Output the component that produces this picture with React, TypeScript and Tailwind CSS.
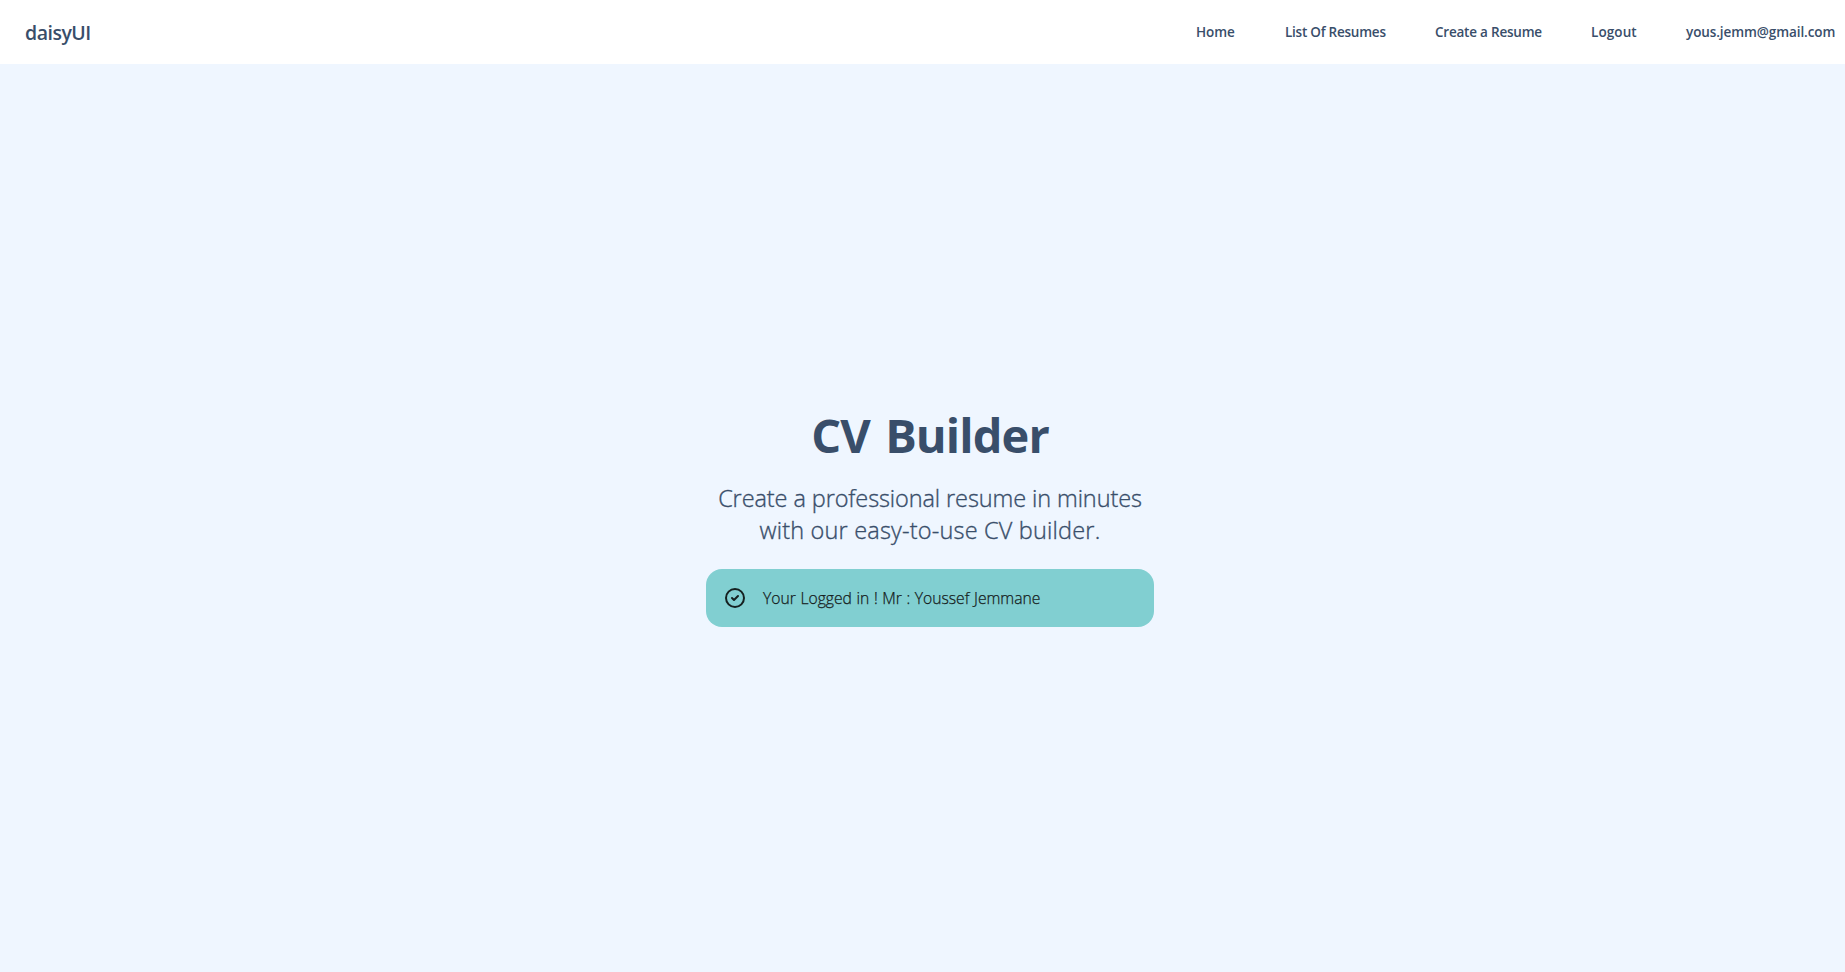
const links = [
  { label: 'Home', style: 'w-[39px] tracking-[-0.1px]' },
  { label: 'List Of Resumes', style: 'w-[100px] tracking-[-0.24px]' },
  { label: 'Create a Resume', style: 'w-[106px] tracking-[-0.22px]' },
  { label: 'Logout', style: 'w-[45px] tracking-[0.1px]' },
  { label: 'yous.jemm@gmail.com', style: 'w-[149px] tracking-[-0.09px]' },
];

function Navbar() {
  return (
    <header className="flex h-16 items-center justify-between bg-white pr-[10px] pl-[25px]">
      <a href="#" className="pt-0.5 text-[19.5px] leading-7 font-semibold tracking-[-0.5px]">daisyUI</a>
      <nav className="flex gap-[50px] text-[13.5px] leading-5 font-semibold whitespace-nowrap">
        {links.map(({ label, style }) => (
          <a key={label} href="#" className={style}>{label}</a>
        ))}
      </nav>
    </header>
  );
}

function SuccessAlert() {
  return (
    <div className="flex h-[58px] w-full items-center gap-4 rounded-2xl bg-[#81cfd1] px-[17px] text-left text-[#152020]">
      <svg className="h-6 w-6 shrink-0" viewBox="0 0 24 24" fill="none" stroke="currentColor" strokeWidth="2" strokeLinecap="round" strokeLinejoin="round">
        <path d="M9 12l2 2 4-4m6 2a9 9 0 11-18 0 9 9 0 0118 0z" />
      </svg>
      <span className="text-[15.7px] leading-6 font-light [-webkit-text-stroke:0.25px] [word-spacing:0.5px]">Your Logged in ! Mr : Youssef Jemmane</span>
    </div>
  );
}

export default function App() {
  return (
    <div className="flex h-screen flex-col overflow-hidden bg-[#eff6ff] font-['Open_Sans',sans-serif] text-[#394e6a]">
      <Navbar />
      <main className="flex grow flex-col items-center pt-[347px] pl-[15px]">
        <div className="flex w-md flex-col items-center text-center">
          <h1 className="text-[47px] leading-12 font-bold tracking-[-0.9px] [word-spacing:4px]">CV Builder</h1>
          <p className="pt-[23px] pb-[23px] text-[23.5px] leading-8 font-light whitespace-nowrap [-webkit-text-stroke:0.35px]">
            <span className="block tracking-[-0.1px]">Create a professional resume in minutes</span>
            <span className="block tracking-[0.18px]">with our easy-to-use CV builder.</span>
          </p>
          <SuccessAlert />
        </div>
      </main>
    </div>
  );
}
